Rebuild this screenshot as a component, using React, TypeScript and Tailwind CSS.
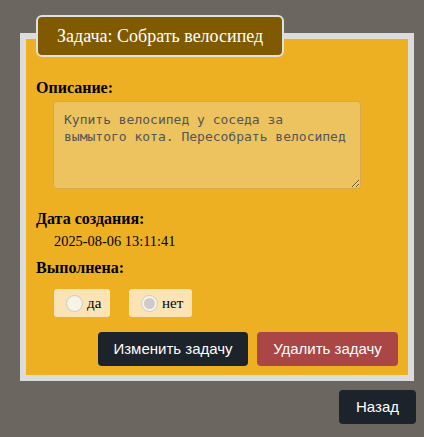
import { useState } from 'react'

export default function App() {
  const [done] = useState(false)

  return (
    <div className="min-h-screen w-full bg-[#6b6660] pt-[15px] font-['Liberation_Serif',serif]">
      <fieldset className="ml-[20px] w-[394px] border-[6px] border-[#dcdcdc] bg-[#ecb022] px-[10px] pb-[9px]">
        {/* Title */}
        <legend className="rounded-[6px] border-2 border-[#e0e0e0] bg-[#7f5a00] px-[19px] py-[8px] text-[18px] leading-[22px] text-white">
          Задача: Собрать велосипед
        </legend>

        <div className="pt-[22px]">
          <div className="text-[16px] font-bold leading-[18px] text-black">Описание:</div>
          <textarea
            readOnly
            defaultValue="Купить велосипед у соседа за вымытого кота. Пересобрать велосипед"
            className="ml-[17px] mt-[4px] block h-[88px] w-[308px] rounded-[4px] border border-[#d6a94a] bg-[#ecc35e] px-[10px] py-[9px] font-['DejaVu_Sans_Mono',monospace] text-[13px] leading-[17px] text-[#555] outline-none"
          />

          <div className="mt-[21px] text-[16px] font-bold leading-[18px] text-black">Дата создания:</div>
          <div className="ml-[18px] mt-[5px] text-[14.4px] leading-[17px] text-black">2025-08-06 13:11:41</div>

          <div className="mt-[9px] text-[16px] font-bold leading-[18px] text-black">Выполнена:</div>
          <div className="ml-[18px] mt-[12px] flex gap-[19px]">
            <label className="flex h-[28px] w-[56px] items-center gap-[4px] rounded-[3px] bg-[#fbe3b6] pl-[12px] text-[15px] text-black">
              <span className="flex h-[17px] w-[17px] items-center justify-center rounded-full border border-[#cfcac0] bg-[#f7f3e8]">
                {done && <span className="h-[9px] w-[9px] rounded-full bg-[#cfcac0]" />}
              </span>
              да
            </label>
            <label className="flex h-[28px] w-[63px] items-center gap-[4px] rounded-[3px] bg-[#fbe3b6] pl-[12px] text-[15px] text-black">
              <span className="flex h-[17px] w-[17px] items-center justify-center rounded-full border border-[#cfcac0] bg-[#f7f3e8]">
                {!done && <span className="h-[11px] w-[11px] rounded-full bg-[#cfcac7]" />}
              </span>
              нет
            </label>
          </div>

          {/* Buttons */}
          <div className="mt-[15px] flex justify-end gap-[9px] font-['Liberation_Sans',sans-serif]">
            <button className="h-[34px] w-[150px] rounded-[4px] bg-[#1d232b] text-[15px] text-white">
              Изменить задачу
            </button>
            <button className="h-[34px] w-[141px] rounded-[4px] bg-[#aa4646] text-[15px] text-white">
              Удалить задачу
            </button>
          </div>
        </div>
      </fieldset>

      <div className="mt-[9px] flex justify-end pr-[8px] font-['Liberation_Sans',sans-serif]">
        <button className="h-[34px] w-[77px] rounded-[4px] bg-[#1d232b] text-[15px] text-white">Назад</button>
      </div>
    </div>
  )
}
